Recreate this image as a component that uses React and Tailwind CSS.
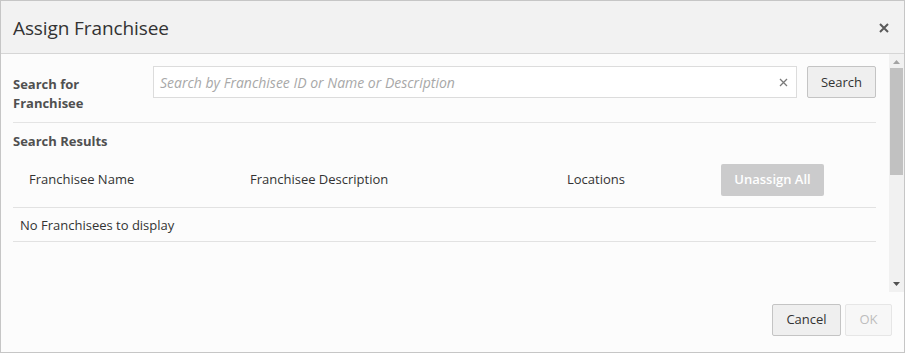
import React from "react";

const font = { fontFamily: '"Open Sans", "Noto Sans", sans-serif' };

const App = () => {
  return (
    <div
      className="w-[905px] h-[353px] border border-[#c6c6c6] bg-[#fcfcfc] flex flex-col text-[#333333] text-[13px]"
      style={font}
    >
      {/* Header */}
      <div className="h-[53px] shrink-0 bg-[#f2f2f2] border-b border-[#d6d6d6] flex items-center justify-between pl-3 pr-2">
        <h1 className="text-[19px] text-[#333333] tracking-[-0.1px] pt-[2px]">Assign Franchisee</h1>
        <button className="w-6 h-6 flex items-center justify-center text-[#555555] mt-[2px]">
          <svg width="10" height="10" viewBox="0 0 10 10">
            <path d="M1 1L9 9M9 1L1 9" stroke="#5a5a5a" strokeWidth="2" />
          </svg>
        </button>
      </div>

      {/* Body with scrollbar */}
      <div className="h-[238px] shrink-0 flex">
        <div className="flex-1 pl-3 pr-[13px] pt-3">
          <div className="flex items-start gap-0">
            <div className="w-[140px] font-bold text-[#505050] leading-[19px] pt-[9px]">
              Search for
              <br />
              Franchisee
            </div>
            <div className="flex-1 h-8 border border-[#dcdcdc] bg-white flex items-center pl-[6px] pr-2">
              <span className="flex-1 italic text-[14px] text-[#a8a8a8] pt-[1px]">
                Search by Franchisee ID or Name or Description
              </span>
              <svg width="9" height="9" viewBox="0 0 9 9">
                <path d="M1 1L8 8M8 1L1 8" stroke="#7a7a7a" strokeWidth="1.3" />
              </svg>
            </div>
            <button className="ml-[10px] w-[69px] h-8 pt-[2px] border border-[#c4c4c4] rounded-[2px] bg-[#efefef] text-[#333333]">
              Search
            </button>
          </div>
          <div className="mt-[9px] border-t border-[#e4e4e4]" />
          <div className="pt-[9px] font-bold text-[#505050] leading-[18px]">Search Results</div>
          <div className="h-[58px] pt-[3px] flex items-center border-b border-[#e2e2e2]">
            <div className="w-[237px] pl-4">Franchisee Name</div>
            <div className="w-[317px]">Franchisee Description</div>
            <div className="w-[154px]">Locations</div>
            <button className="w-[103px] h-8 bg-[#cbcbcc] rounded-[2px] text-white font-semibold text-[13px]">
              Unassign All
            </button>
          </div>
          <div className="h-[34px] pt-[2px] flex items-center pl-[7px] border-b border-[#e2e2e2]">
            No Franchisees to display
          </div>
        </div>
        {/* Scrollbar */}
        <div className="w-[15px] bg-[#f1f1f1] flex flex-col items-center">
          <svg width="7" height="4" viewBox="0 0 7 4" className="mt-[6px]">
            <path d="M0 4L3.5 0L7 4Z" fill="#a3a3a3" />
          </svg>
          <div className="mt-[4px] w-[13px] h-[107px] bg-[#c1c1c1]" />
          <div className="flex-1" />
          <svg width="7" height="4" viewBox="0 0 7 4" className="mb-[6px]">
            <path d="M0 0L3.5 4L7 0Z" fill="#505050" />
          </svg>
        </div>
      </div>

      {/* Footer */}
      <div className="flex-1 flex items-start justify-end gap-1 pr-3 pt-[12px]">
        <button className="w-[69px] h-8 border border-[#c4c4c4] rounded-[2px] bg-[#efefef] text-[#333333]">
          Cancel
        </button>
        <button className="w-[47px] h-8 border border-[#e6e6e6] rounded-[2px] bg-[#f7f7f7] text-[#bdbdbd]">
          OK
        </button>
      </div>
    </div>
  );
};

export default App;
